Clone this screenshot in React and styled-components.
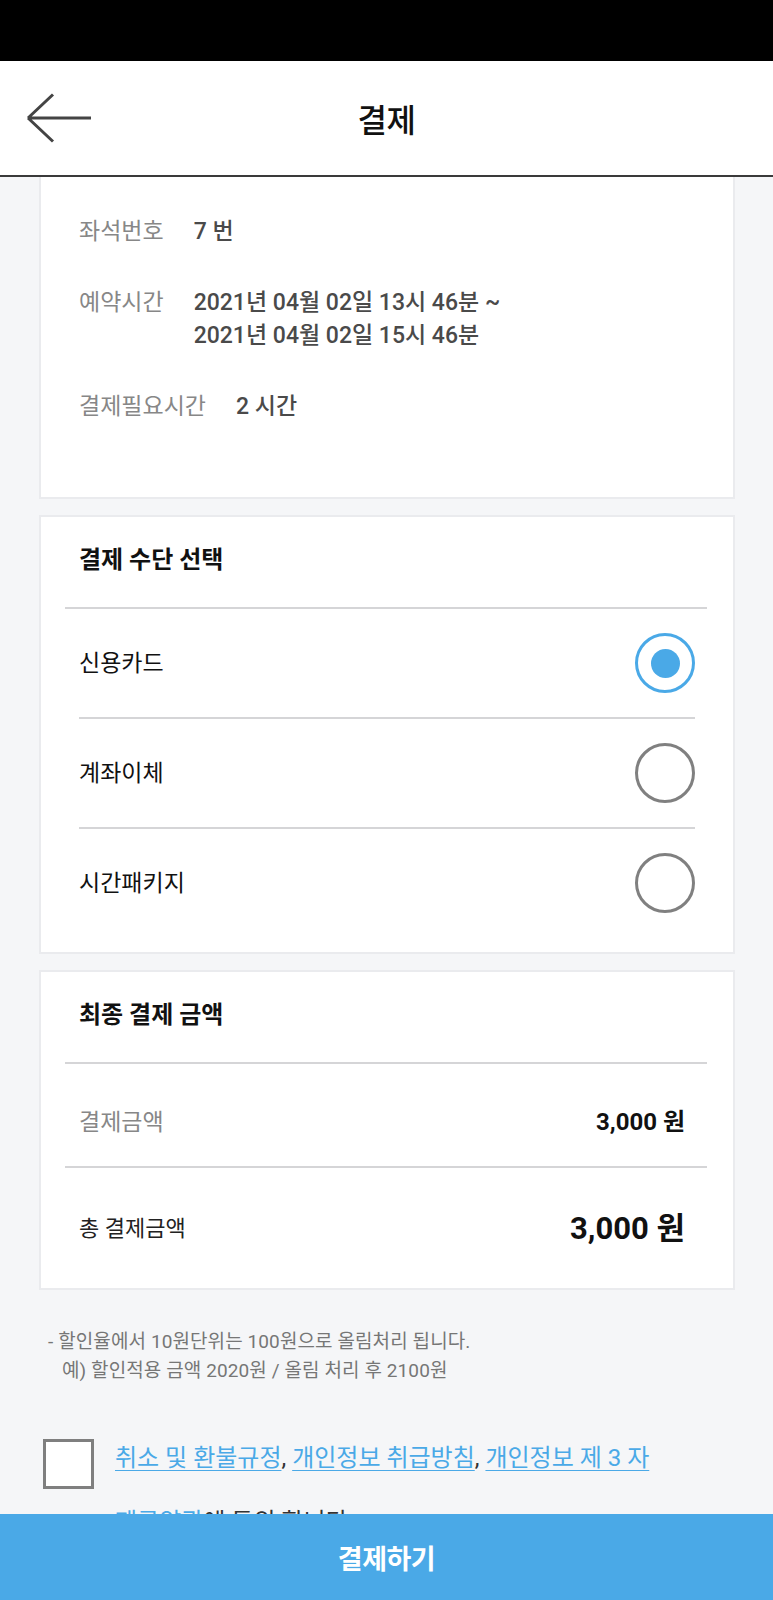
import React, { useState } from 'react';
import styled, { createGlobalStyle } from 'styled-components';

const GlobalStyle = createGlobalStyle`
    html, body {
        margin: 0;
        padding: 0;
        background: #f5f6f8;
        font-family: Roboto, "Noto Sans CJK KR", "Noto Sans", sans-serif;
        -webkit-font-smoothing: antialiased;
    }
    * {
        box-sizing: border-box;
    }
`;

const Page = styled.div`
    min-height: 1600px;
    background: #f5f6f8;
`;

const StatusBar = styled.div`
    height: 61px;
    background: #000;
`;

const Header = styled.div`
    height: 116px;
    background: #fff;
    border-bottom: 2px solid #3a3a3a;
    display: grid;
    grid-template-columns: 1fr auto 1fr;
    align-items: center;
`;

const BackButton = styled.button`
    justify-self: start;
    margin-left: 26px;
    padding: 0;
    border: 0;
    background: none;
    display: flex;
    cursor: pointer;
`;

const HeaderTitle = styled.h1`
    margin: 0;
    font-size: 32px;
    font-weight: 500;
    color: #111;
    letter-spacing: -0.5px;
`;

const Content = styled.div`
    padding: 0 38px 200px 39px;
`;

const Card = styled.div`
    background: #fff;
    border: 2px solid #eaebee;
    border-top: ${props => props.$clipped ? '0' : '2px solid #eaebee'};
    margin-top: ${props => props.$clipped ? '0' : '16px'};
`;

const InfoList = styled.div`
    padding: 38px 38px 74px;
    display: grid;
    row-gap: 38px;
`;

const InfoRow = styled.div`
    display: flex;
    gap: 30px;
    line-height: 33px;
`;

const InfoLabel = styled.span`
    font-size: 23px;
    color: #878787;
`;

const InfoValue = styled.span`
    font-size: 23px;
    color: #4a4a4a;
    font-weight: 500;
`;

const CardHeader = styled.div`
    height: 90px;
    padding: 0 38px 9px;
    display: flex;
    align-items: center;
    font-size: 24px;
    font-weight: 700;
    color: #111;
`;

const Divider = styled.div`
    height: 2px;
    background: #d5d5d7;
    margin: 0 26px 0 24px;
`;

const OptionList = styled.div`
    margin: 0 38px;
    padding-bottom: 15px;
`;

const OptionRow = styled.label`
    height: 110px;
    display: flex;
    align-items: center;
    justify-content: space-between;
    font-size: 23px;
    color: #111;
    cursor: pointer;
    border-bottom: 2px solid #d5d5d7;
    &:last-child {
        border-bottom: 0;
        height: 108px;
    }
`;

const OptionName = styled.span`
    padding-bottom: 5px;
`;

const Radio = styled.span`
    width: 60px;
    height: 60px;
    border-radius: 50%;
    border: 3px solid ${props => props.$checked ? '#4aa9e7' : '#808080'};
    display: flex;
    align-items: center;
    justify-content: center;
    &::after {
        content: '';
        width: 29px;
        height: 29px;
        border-radius: 50%;
        background: #4aa9e7;
        display: ${props => props.$checked ? 'block' : 'none'};
    }
`;

const AmountRow = styled.div`
    display: flex;
    align-items: center;
    justify-content: space-between;
    padding: ${props => props.$total ? '0 48px 0 38px' : '42px 48px 27px 38px'};
    height: ${props => props.$total ? '120px' : 'auto'};
    line-height: 33px;
`;

const AmountLabel = styled.span`
    font-size: ${props => props.$total ? '22px' : '23px'};
    color: ${props => props.$total ? '#222' : '#878787'};
`;

const AmountValue = styled.span`
    font-size: ${props => props.$total ? '31px' : '24px'};
    font-weight: 700;
    color: #111;
`;

const Notice = styled.div`
    margin-top: 37px;
    padding-left: 9px;
    font-size: 19px;
    letter-spacing: 0.1px;
    line-height: 29px;
    color: #767676;
`;

const NoticeLine = styled.div`
    padding-left: ${props => props.$indent ? '14px' : '0'};
`;

const Agreement = styled.div`
    margin-top: 41px;
    padding-left: 4px;
    padding-right: 40px;
    display: flex;
    align-items: flex-start;
    gap: 21px;
`;

const CheckBox = styled.span`
    flex: none;
    margin-top: 13px;
    width: 51px;
    height: 50px;
    border: 3px solid #7f7f7f;
    background: ${props => props.$checked ? '#4aa9e7' : '#fff'};
    cursor: pointer;
`;

const AgreementText = styled.p`
    margin: 0;
    font-size: 24px;
    line-height: 64px;
    color: #333;
    word-break: keep-all;
`;

const TermLink = styled.a`
    color: #4aa9e7;
    text-decoration: underline;
    text-underline-offset: 4px;
    text-decoration-thickness: 1px;
`;

const PayButton = styled.button`
    position: fixed;
    left: 0;
    right: 0;
    bottom: 0;
    height: 86px;
    border: 0;
    background: #4aa9e7;
    color: #fff;
    font-family: inherit;
    font-size: 27px;
    font-weight: 700;
    letter-spacing: -0.5px;
    cursor: pointer;
`;

const BackArrow = () => (
    <svg width="66" height="50" viewBox="0 0 66 50" fill="none">
        <path d="M2 25 H65 M2 25 L27 1.5 M2 25 L27 48.5" stroke="#444" strokeWidth="3" />
    </svg>
);

const methods = ['신용카드', '계좌이체', '시간패키지'];

const App = () => {
    const [method, setMethod] = useState(0);
    const [agreed, setAgreed] = useState(false);

    return (
        <Page>
            <GlobalStyle />
            <StatusBar />
            <Header>
                <BackButton aria-label="뒤로">
                    <BackArrow />
                </BackButton>
                <HeaderTitle>결제</HeaderTitle>
                <span />
            </Header>
            <Content>
                <Card $clipped>
                    <InfoList>
                        <InfoRow>
                            <InfoLabel>좌석번호</InfoLabel>
                            <InfoValue>7 번</InfoValue>
                        </InfoRow>
                        <InfoRow>
                            <InfoLabel>예약시간</InfoLabel>
                            <InfoValue>
                                2021년 04월 02일 13시 46분 ~<br />
                                2021년 04월 02일 15시 46분
                            </InfoValue>
                        </InfoRow>
                        <InfoRow>
                            <InfoLabel>결제필요시간</InfoLabel>
                            <InfoValue>2 시간</InfoValue>
                        </InfoRow>
                    </InfoList>
                </Card>

                <Card>
                    <CardHeader>결제 수단 선택</CardHeader>
                    <Divider />
                    <OptionList>
                        {methods.map((name, i) => (
                            <OptionRow key={name} onClick={() => setMethod(i)}>
                                <OptionName>{name}</OptionName>
                                <Radio $checked={method === i} />
                            </OptionRow>
                        ))}
                    </OptionList>
                </Card>

                <Card>
                    <CardHeader>최종 결제 금액</CardHeader>
                    <Divider />
                    <AmountRow>
                        <AmountLabel>결제금액</AmountLabel>
                        <AmountValue>3,000 원</AmountValue>
                    </AmountRow>
                    <Divider />
                    <AmountRow $total>
                        <AmountLabel $total>총 결제금액</AmountLabel>
                        <AmountValue $total>3,000 원</AmountValue>
                    </AmountRow>
                </Card>

                <Notice>
                    <NoticeLine>- 할인율에서 10원단위는 100원으로 올림처리 됩니다.</NoticeLine>
                    <NoticeLine $indent>예) 할인적용 금액 2020원 / 올림 처리 후 2100원</NoticeLine>
                </Notice>

                <Agreement>
                    <CheckBox $checked={agreed} onClick={() => setAgreed(!agreed)} />
                    <AgreementText>
                        <TermLink>취소 및 환불규정</TermLink>, <TermLink>개인정보 취급방침</TermLink>, <TermLink>개인정보 제 3 자 제공약관</TermLink>에 동의 합니다.
                    </AgreementText>
                </Agreement>
            </Content>
            <PayButton>결제하기</PayButton>
        </Page>
    );
};

export default App;
